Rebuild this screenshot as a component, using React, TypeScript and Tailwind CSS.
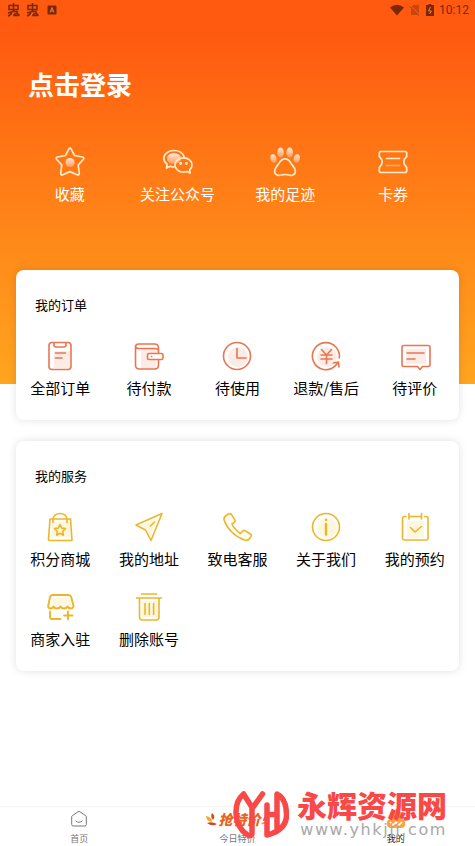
import type { ReactNode } from "react";

type Item = { label: string; icon: ReactNode };

function OrderIcon({ children }: { children: ReactNode }) {
  return (
    <svg viewBox="0 0 32 32" className="size-8" fill="none" stroke="#ea7550" strokeWidth="1.6" strokeLinecap="round" strokeLinejoin="round" aria-hidden="true">
      {children}
    </svg>
  );
}

function ServiceIcon({ children }: { children: ReactNode }) {
  return (
    <svg viewBox="0 0 32 32" className="size-8" fill="none" stroke="#efb52a" strokeWidth="1.6" strokeLinecap="round" strokeLinejoin="round" aria-hidden="true">
      {children}
    </svg>
  );
}

function TopIcon({ children }: { children: ReactNode }) {
  return (
    <svg viewBox="0 0 32 32" className="size-8" fill="none" stroke="#ffeccb" strokeWidth="1.7" strokeLinecap="round" strokeLinejoin="round" aria-hidden="true">
      <defs>
        <linearGradient id="glow" x1="0" y1="0" x2="0" y2="1">
          <stop offset="0" stopColor="#ffe9d6" />
          <stop offset="1" stopColor="#ff9a5c" />
        </linearGradient>
      </defs>
      {children}
    </svg>
  );
}

const shortcuts: Item[] = [
  {
    label: "收藏",
    icon: (
      <TopIcon>
        <circle cx="16" cy="16.5" r="4.6" fill="url(#glow)" stroke="none" />
        <path d="M14.8 3.1q1.2-2.1 2.4 0l3.3 6.4 7.9 1.5q2.4.6.8 2.5l-5 5.5 1.1 8.2q0 2.3-2.2 1.5L16 25.6l-7.1 3.1q-2.2.8-2.2-1.5L7.8 19l-5-5.5q-1.6-1.9.8-2.5l7.9-1.5z" />
      </TopIcon>
    ),
  },
  {
    label: "关注公众号",
    icon: (
      <TopIcon>
        <ellipse cx="12" cy="12.5" rx="7" ry="5.5" fill="url(#glow)" stroke="none" />
        <path d="M12.5 21q-2.300 0-4.200-.8L4.500 22l.6-3.700Q1.800 15.800 1.800 12.500C1.800 8 6.300 4.500 12 4.500c5 0 9 2.700 10.100 6.500" />
        <path d="M21.500 11.800c-4.700 0-8.500 3.200-8.500 7.200s3.800 7.200 8.500 7.200q1.900 0 3.600-.7l3 1.600-.4-3.200q2.300-2.100 2.300-4.900c0-4-3.800-7.200-8.500-7.200z" />
        <circle cx="18.700" cy="17.500" r=".6" />
        <circle cx="24.300" cy="17.500" r=".6" />
      </TopIcon>
    ),
  },
  {
    label: "我的足迹",
    icon: (
      <TopIcon>
        <g fill="url(#glow)" stroke="none">
          <ellipse cx="4.500" cy="12.500" rx="3" ry="4.300" transform="rotate(-14 4.500 12.500)" />
          <ellipse cx="11.500" cy="6.500" rx="3.300" ry="5" />
          <ellipse cx="20.700" cy="6.500" rx="3.300" ry="5" />
          <ellipse cx="27.700" cy="12.500" rx="3" ry="4.300" transform="rotate(14 27.700 12.500)" />
        </g>
        <path d="M16 12.800c-3.600 0-4.800 2.200-5.900 4.400-1.200 2.200-4.500 4.400-4.500 8 0 3.200 2.700 4.600 5.500 4 2-.5 3.200-.7 4.900-.7s2.900.2 4.900.7c2.800.6 5.500-.8 5.500-4 0-3.600-3.300-5.800-4.500-8-1.100-2.200-2.300-4.400-5.900-4.400z" />
      </TopIcon>
    ),
  },
  {
    label: "卡券",
    icon: (
      <TopIcon>
        <path d="M4 5.500h24q1.700 0 1.700 1.700v3.300q-2.900 2.600-2.900 5.500t2.900 5.500v3.300q0 1.700-1.700 1.700H4q-1.700 0-1.700-1.700v-3.300Q5.200 18.900 5.200 16t-2.900-5.500V7.200q0-1.700 1.700-1.700z" />
        <path d="M9.500 12.500h13" />
        <path d="M9.500 19.500h13" stroke="#ffaf73" />
      </TopIcon>
    ),
  },
];

const orders: Item[] = [
  {
    label: "全部订单",
    icon: (
      <OrderIcon>
        <rect x="10" y="11" width="16" height="17" fill="#fdebe5" stroke="none" />
        <rect x="5" y="2.500" width="22" height="27" rx="3" />
        <path d="M10 3v2q0 2 2 2h8q2 0 2-2V3M11.500 13h10M11.500 18h6.500" />
      </OrderIcon>
    ),
  },
  {
    label: "待付款",
    icon: (
      <OrderIcon>
        <rect x="8" y="9" width="15" height="19" fill="#fdebe5" stroke="none" />
        <path d="M25.500 13V8q0-4-4-4H5.500Q2.500 4 2.500 7v18q0 4 4 4h15q4 0 4-4v-5M2.500 6q0 2.500 3 2.500h16q4 0 4 3" />
        <rect x="14.500" y="13.500" width="15.500" height="6" rx="1.500" fill="white" />
        <path d="M18.500 16.500h.2" />
      </OrderIcon>
    ),
  },
  {
    label: "待使用",
    icon: (
      <OrderIcon>
        <circle cx="17" cy="17" r="10" fill="#fdebe5" stroke="none" />
        <circle cx="16" cy="16" r="13.500" />
        <path d="M16 8.500V18h9" />
      </OrderIcon>
    ),
  },
  {
    label: "退款/售后",
    icon: (
      <OrderIcon>
        <circle cx="17" cy="17" r="10" fill="#fdebe5" stroke="none" />
        <path d="M29.300 18A13.500 13.500 0 1 0 22 28.200q3-1.500 6-5.500M23.500 23l5-1 .5 5M11.500 9.500l5 5.500 5-5.500M11 15h11M11 19h11M16.500 15v8.500" />
      </OrderIcon>
    ),
  },
  {
    label: "待评价",
    icon: (
      <OrderIcon>
        <rect x="7" y="9" width="20" height="15" fill="#fdebe5" stroke="none" />
        <path d="M5 5.500h24q2 0 2 2v17q0 2-2 2h-5.500L21 29.500l-2.500-3H5q-2 0-2-2v-17q0-2 2-2zM8 13h17M8 19h8" />
      </OrderIcon>
    ),
  },
];

const services: Item[] = [
  {
    label: "积分商城",
    icon: (
      <ServiceIcon>
        <path d="M8 11h17l2 15H7z" fill="#fdf8dd" stroke="none" />
        <path d="M6 8h20.500l1.500 21q0 .5-1 .5H5.500q-1 0-1-1zM9 11.500V8q1-5.500 7-5.500T23 8v3.500M16 13.500l1.700 3.600 3.800.5-2.800 2.700.7 3.900-3.400-1.900-3.400 1.900.7-3.900-2.800-2.700 3.800-.5z" />
      </ServiceIcon>
    ),
  },
  {
    label: "我的地址",
    icon: (
      <ServiceIcon>
        <path d="m8 14 16-7-7 20-3-8z" fill="#fdf8dd" stroke="none" />
        <path d="M29 2.500 3 14l9.500 5L18 29.500zM17.500 15l4-4" />
      </ServiceIcon>
    ),
  },
  {
    label: "致电客服",
    icon: (
      <ServiceIcon>
        <path d="m4.500 5 3-2q2-1 3 .6l3.200 5q1 1.700-.7 3L11 13q2 5 8.500 9.500l2-2.300q1.200-1.400 2.900-.3l5 3.100q1.600 1.100.5 2.800l-2.100 2.600q-1.500 1.700-4.300.7C13.500 25.500 6 17.500 3.300 9.500 2.600 7.500 2.800 6.300 4.500 5z" fill="#fffdf2" />
      </ServiceIcon>
    ),
  },
  {
    label: "关于我们",
    icon: (
      <ServiceIcon>
        <circle cx="17" cy="17" r="10" fill="#fdf8dd" stroke="none" />
        <circle cx="16" cy="16" r="13.500" />
        <path d="M16 13v10.500M16 8.800v.2" strokeWidth="2.400" />
      </ServiceIcon>
    ),
  },
  {
    label: "我的预约",
    icon: (
      <ServiceIcon>
        <rect x="8" y="10" width="17" height="17" fill="#fdf8dd" stroke="none" />
        <path d="M7 5.500H5.500q-2 0-2 2V27q0 2 2 2h21.500q2 0 2-2V7.500q0-2-2-2H25.500M10 5.500h12.500M10 2.500V8M22.500 2.500V8M11.500 16.500l4.500 4.500 6.500-5.500" />
      </ServiceIcon>
    ),
  },
  {
    label: "商家入驻",
    icon: (
      <ServiceIcon>
        <path d="M9 7h16l3 8H8z" fill="#fdf8dd" stroke="none" />
        <path d="M8.500 4h16q2 0 2.700 2l2.300 9q0 2-2.500 2.500-2.500 0-3.500-2-1 2-3.500 2t-3.500-2q-1 2-3.500 2t-3.500-2q-1 2-3 2-2.300 0-2.300-2.500L6 6q.6-2 2.500-2zM6 20.500V26q0 2 2 2h8.500M24 20.500v8M20 24.500h8.500" strokeWidth="1.900" />
      </ServiceIcon>
    ),
  },
  {
    label: "删除账号",
    icon: (
      <ServiceIcon>
        <path d="M9 10h16v16H9z" fill="#fdf8dd" stroke="none" />
        <path d="M8.500 3h15M3.500 7h25M6.500 7.500V26q0 3 3 3h13.500q3 0 3-3V7.500M12 12.500v11M16.300 12.500v11M20.600 12.500v11" />
      </ServiceIcon>
    ),
  },
];

function ItemButton({ item }: { item: Item }) {
  return (
    <button type="button" className="flex h-16 flex-col items-center gap-1 text-[15px] leading-6 whitespace-nowrap">
      {item.icon}
      <span>{item.label}</span>
    </button>
  );
}

function Card({ title, items }: { title: string; items: Item[] }) {
  return (
    <section className="rounded-lg bg-white pt-[25px] pb-4 text-black shadow-[0_0_8px_rgba(0,0,0,0.12)]">
      <h2 className="mb-[25px] pl-[19px] text-[13px] leading-5">{title}</h2>
      <div className="grid grid-cols-5 gap-y-4">
        {items.map((item) => (
          <ItemButton key={item.label} item={item} />
        ))}
      </div>
    </section>
  );
}

function BugIcon() {
  return (
    <svg viewBox="0 0 14 14" className="size-3.5" fill="none" stroke="currentColor" strokeWidth="1.500" aria-hidden="true">
      <path d="M6.500 0v9M2 2.500h9v4H2zM1 10l5.500-1.500M4.500 9q0 3-3.500 4M7 8.500h3v2q-3 0-3 2h5.500M10.500 10.500l2 2" />
    </svg>
  );
}

function StatusBar() {
  return (
    <div className="flex h-5 items-center justify-between pr-1.5 pl-[7px] text-[#79290a]">
      <div className="flex items-center gap-[5px]">
        <BugIcon />
        <BugIcon />
        <svg viewBox="0 0 10 10" className="ml-0.5 size-2.5" aria-hidden="true">
          <rect x=".5" y=".5" width="9" height="9" rx="1" fill="currentColor" />
          <path d="m3 7.500 2-5 2 5M3.800 6h2.400" fill="none" stroke="#ff7a3c" />
        </svg>
      </div>
      <div className="flex items-center gap-[5px]">
        <svg viewBox="0 0 14 12" className="h-3 w-3.5" fill="currentColor" aria-hidden="true">
          <path d="M0 3.500q7-5.500 14 0L7 11.500z" />
        </svg>
        <svg viewBox="0 0 12 12" className="size-3 opacity-40" aria-hidden="true">
          <path d="M4 1h6v10H2V3z" fill="currentColor" />
          <path d="m1 1 10 10" stroke="#ff5c10" />
          <path d="m0 2 10 10" stroke="currentColor" />
        </svg>
        <svg viewBox="0 0 8 12" className="h-3 w-2" aria-hidden="true">
          <path d="M2.500 0h3v1H8v11H0V1h2.500z" fill="currentColor" />
          <path d="M4.500 3 2.500 7h3l-2 3" fill="none" stroke="#ff7a3c" />
        </svg>
        <span className="font-[Roboto,sans-serif] text-[12px] leading-5">10:12</span>
      </div>
    </div>
  );
}

function Watermark() {
  return (
    <div className="pointer-events-none absolute right-7 bottom-1.5 flex items-end">
      <svg viewBox="0 0 56 50" className="mr-2 h-[50px] w-14" fill="none" stroke="#f84848" strokeWidth="5.500" strokeLinecap="round" strokeLinejoin="round" aria-hidden="true">
        <path d="M10.500 4C0 13 0 35 14 44.500q5 3 5-2V18M10.500 4 19.500 18 29.500 4M34 15v30q20-5 19.500-21T44 4v34M34 24.500h10" />
      </svg>
      <div className="flex flex-col items-end whitespace-nowrap">
        <strong className="text-[30px] leading-8 font-black text-[#f84848]">永辉资源网</strong>
        <span className="font-['DejaVu_Sans',Verdana,sans-serif] text-[16px] leading-5 tracking-widest text-[#a8a8a8]">www.yhkjjj.com</span>
      </div>
    </div>
  );
}

function TabBar() {
  const tab = "flex flex-col items-center gap-1 pt-0.5 text-[9px] leading-3";
  return (
    <nav className="relative grid h-10 grid-cols-3 border-t border-[#f4f4f4] bg-white text-[#777]">
      <button type="button" className={tab}>
        <svg viewBox="0 0 20 20" className="size-5" fill="none" stroke="#777" strokeWidth="1" strokeLinejoin="round" strokeLinecap="round" aria-hidden="true">
          <path d="M10 2.500q.6 0 1 .3l5.500 3.700q.8.500.8 1.500v7.500q0 1.500-1.500 1.500H4.200q-1.500 0-1.500-1.500V8q0-1 .8-1.500L9 2.800q.4-.3 1-.3zM6.800 12q3.200 2.800 6.400 0" />
        </svg>
        <span>首页</span>
      </button>
      <button type="button" className={tab}>
        <span className="flex h-5 items-center text-[14px] leading-5 font-black text-[#e8641f] italic">
          <svg viewBox="0 0 12 14" className="h-3.5 w-3" aria-hidden="true">
            <path d="M0 4q6 1 6 6Q0 9 0 4z" fill="#f5a52b" />
            <path d="M6 1q4 3 1 7-3-3-1-7zM1 11q5-2 10 1-5 3-10-1z" fill="#d8471b" />
          </svg>
          抢特价
          <svg viewBox="0 0 8 14" className="h-3.5 w-2" aria-hidden="true">
            <path d="M7 3q1 4-4 6 0-4 4-6z" fill="#d8471b" />
            <path d="M1 12q2-3 5-2-1 3-5 2z" fill="#f5a52b" />
          </svg>
        </span>
        <span>今日特价</span>
      </button>
      <button type="button" className={`${tab} text-[#222]`}>
        <svg viewBox="0 0 20 20" className="size-5" aria-hidden="true">
          <path d="M10 0 16 4v6H4V4z" fill="#ffa23a" />
          <rect x="1" y="10" width="18" height="9" rx="4" fill="#ffa23a" />
          <path d="m4 13 3 3 3-3 3 3 3-3" fill="none" stroke="white" strokeWidth="1.500" />
        </svg>
        <span>我的</span>
      </button>
      <Watermark />
    </nav>
  );
}

export default function App() {
  return (
    <div className="flex min-h-screen flex-col bg-white font-['Noto_Sans_CJK_SC',sans-serif]">
      <header className="h-96 bg-linear-to-b from-[#ff5a10] from-10% to-[#ffa51f] text-white">
        <StatusBar />
        <button type="button" className="mt-[42px] ml-7 block text-[26px] leading-11 font-bold">
          点击登录
        </button>
        <div className="mt-10 grid grid-cols-4 pr-7 pl-4">
          {shortcuts.map((item) => (
            <ItemButton key={item.label} item={item} />
          ))}
        </div>
      </header>
      <main className="-mt-[114px] flex flex-1 flex-col gap-[21px] px-4">
        <Card title="我的订单" items={orders} />
        <Card title="我的服务" items={services} />
      </main>
      <TabBar />
    </div>
  );
}
